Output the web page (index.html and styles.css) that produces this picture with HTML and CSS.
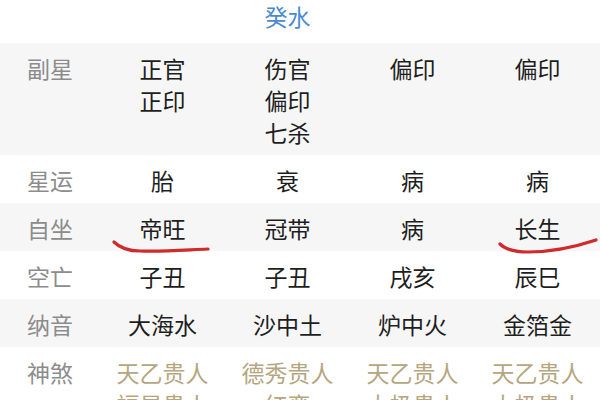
FILE: index.html
```html
<!DOCTYPE html>
<html lang="zh-CN">
<head>
<meta charset="utf-8">
<title>排盘</title>
<link rel="stylesheet" href="styles.css">
</head>
<body>
<div class="page">
  <div class="sheet">
    <div class="row row-top">
      <div class="label">藏干</div>
      <div class="cell"><span class="ln water">壬水</span><span class="ln wood">甲木</span></div>
      <div class="cell"><span class="ln earth">戊土</span><span class="ln wood">乙木</span><span class="ln water">癸水</span></div>
      <div class="cell"><span class="ln wood">乙木</span></div>
      <div class="cell"><span class="ln wood">乙木</span></div>
    </div>
    <div class="row shade">
      <div class="label">副星</div>
      <div class="cell"><span class="ln">正官</span><span class="ln">正印</span></div>
      <div class="cell"><span class="ln">伤官</span><span class="ln">偏印</span><span class="ln">七杀</span></div>
      <div class="cell"><span class="ln">偏印</span></div>
      <div class="cell"><span class="ln">偏印</span></div>
    </div>
    <div class="row">
      <div class="label">星运</div>
      <div class="cell">胎</div>
      <div class="cell">衰</div>
      <div class="cell">病</div>
      <div class="cell">病</div>
    </div>
    <div class="row shade">
      <div class="label">自坐</div>
      <div class="cell">帝旺</div>
      <div class="cell">冠带</div>
      <div class="cell">病</div>
      <div class="cell">长生</div>
    </div>
    <div class="row">
      <div class="label">空亡</div>
      <div class="cell">子丑</div>
      <div class="cell">子丑</div>
      <div class="cell">戌亥</div>
      <div class="cell">辰巳</div>
    </div>
    <div class="row shade">
      <div class="label">纳音</div>
      <div class="cell">大海水</div>
      <div class="cell">沙中土</div>
      <div class="cell">炉中火</div>
      <div class="cell">金箔金</div>
    </div>
    <div class="row">
      <div class="label">神煞</div>
      <div class="cell gods"><span class="ln">天乙贵人</span><span class="ln">福星贵人</span></div>
      <div class="cell gods"><span class="ln">德秀贵人</span><span class="ln">红鸾</span></div>
      <div class="cell gods"><span class="ln">天乙贵人</span><span class="ln">太极贵人</span></div>
      <div class="cell gods"><span class="ln">天乙贵人</span><span class="ln">太极贵人</span></div>
    </div>
  </div>
  <svg class="marks" width="600" height="400" viewBox="0 0 600 400">
    <path d="M114 242 C 120 248, 128 251, 140 251 C 160 252, 185 250, 208 249" />
    <path d="M500 244 C 506 250, 515 252, 528 252 C 550 252, 572 248, 596 240" />
  </svg>
</div>
</body>
</html>
```

FILE: styles.css
```css
html, body {
  margin: 0;
  padding: 0;
  background: #ffffff;
}
body {
  width: 600px;
  height: 400px;
  overflow: hidden;
  font-family: "Noto Sans CJK SC", "Noto Sans", sans-serif;
  font-size: 23px;
  color: #222222;
}
.page {
  position: relative;
  width: 600px;
  height: 400px;
  overflow: hidden;
}
.sheet {
  margin-top: -73px;
}
.row {
  display: grid;
  grid-template-columns: 100px repeat(4, 1fr);
  padding: 9px 0 7px;
  line-height: 32px;
  background: #ffffff;
}
.row.shade {
  background: #f6f6f6;
}
.row-top {
  padding-bottom: 11px;
}
.label {
  text-align: center;
  color: #8c8c8c;
}
.cell {
  text-align: center;
  color: #1e1e1e;
}
.ln {
  display: block;
}
.water { color: #4a8bd0; }
.wood { color: #3e9a5a; }
.earth { color: #a0784a; }
.gods { color: #b5a67f; }
.marks {
  position: absolute;
  left: 0;
  top: 0;
  pointer-events: none;
}
.marks path {
  fill: none;
  stroke: #cf2a2c;
  stroke-width: 3.2;
  stroke-linecap: round;
}
```
